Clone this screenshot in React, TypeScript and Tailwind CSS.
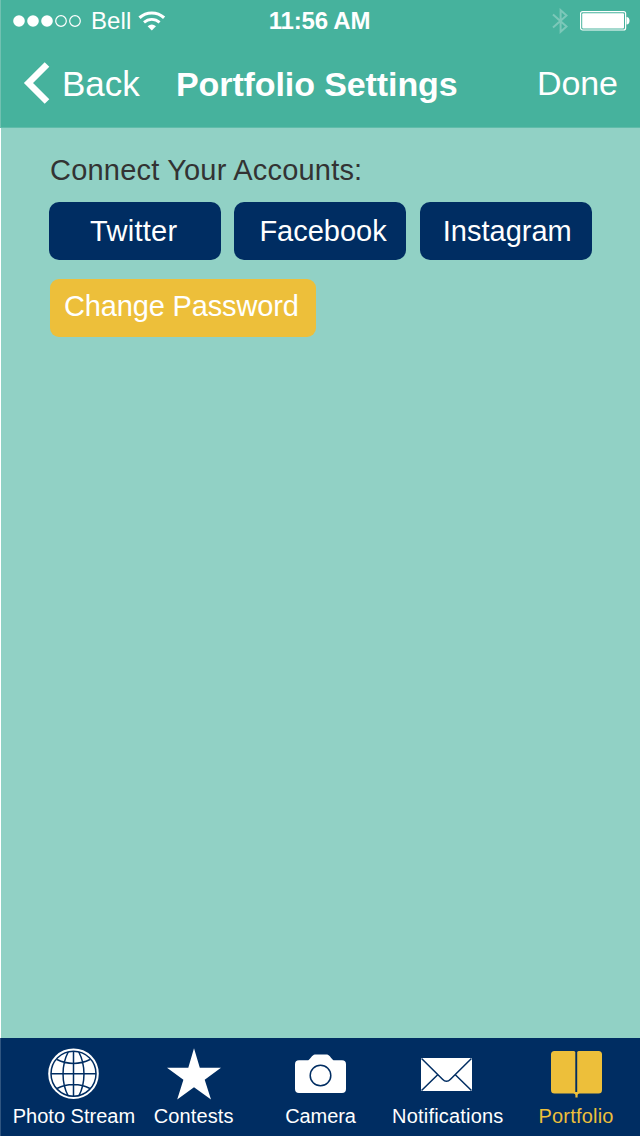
import React from "react";

function SignalDots() {
  return (
    <svg width="70" height="14" viewBox="0 0 70 14" fill="white">
      <circle cx="7" cy="7" r="5.8" />
      <circle cx="21" cy="7" r="5.8" />
      <circle cx="35" cy="7" r="5.8" />
      <g fill="none" stroke="white" strokeWidth="1.2">
        <circle cx="49" cy="7" r="5.3" />
        <circle cx="63" cy="7" r="5.3" />
      </g>
    </svg>
  );
}

function Wifi() {
  return (
    <svg width="28" height="20" viewBox="0 0 28 20" fill="none" stroke="white">
      <path d="M1.5 6.800C8.500 .4 19.100 .4 26.100 6.800" strokeWidth="3.200" />
      <path d="M6 11.400C10.500 7.400 17.100 7.400 21.600 11.400" strokeWidth="2.800" />
      <path d="M9.600 15.200Q13.800 11.600 18 15.200L13.800 19.400Z" fill="white" stroke="none" />
    </svg>
  );
}

function Bluetooth() {
  return (
    <svg width="18" height="26" viewBox="0 0 18 26" fill="none" stroke="#7cc8b9" strokeWidth="2">
      <path d="M1 6.500 14.500 18.600 8.600 23.800V2.200L14.500 7.600 1 19.500" />
    </svg>
  );
}

function Battery() {
  return (
    <svg width="51" height="20" viewBox="0 0 51 20">
      <rect x=".6" y=".6" width="45" height="18.400" rx="2" fill="none" stroke="white" strokeWidth="1.200" />
      <rect x="2.200" y="2.200" width="41.800" height="15.200" rx="1" fill="white" />
      <path d="M46.500 6c2 .2 3 1.500 3 3.800s-1 3.600-3 3.800Z" fill="white" />
    </svg>
  );
}

function Globe() {
  return (
    <svg width="52" height="52" viewBox="0 0 52 52" fill="none" stroke="#002d62" strokeWidth="1.500">
      <circle cx="25.500" cy="25.700" r="25.300" fill="white" stroke="none" />
      <circle cx="25.500" cy="25.700" r="22.500" />
      <path d="M25.500 3.500v45M3 25.700h45M20.200 4C13.300 17 13.300 35 20.200 48M30.800 4c6.900 13 6.900 31 0 44M9 11.500c10 5.200 23 5.200 33 0M9 40.500c10-5.200 23-5.200 33 0" />
    </svg>
  );
}

function Star() {
  return (
    <svg width="54" height="52" viewBox="0 0 54 52" fill="white">
      <path d="M27 .3 32.800 19.800H54L37.700 31.800 44 51.500 27 39.300 10.200 51.500 16.400 31.800 0 19.800h21.300Z" />
    </svg>
  );
}

function Camera() {
  return (
    <svg width="51" height="39" viewBox="0 0 51 39">
      <path d="M4 6.300h8.500c2.200 0 4.700-5.900 7.400-5.900H32c2.700 0 5 5.900 7.400 5.900H47a4 4 0 0 1 4 4V35a4 4 0 0 1-4 4H4a4 4 0 0 1-4-4V10.300a4 4 0 0 1 4-4Z" fill="white" />
      <circle cx="25.500" cy="21.500" r="10.300" fill="none" stroke="#002d62" strokeWidth="1.500" />
    </svg>
  );
}

function Envelope() {
  return (
    <svg width="51" height="33" viewBox="0 0 51 33">
      <path d="M0 0h51v33H0Z" fill="white" />
      <path d="m.5.5 21 20.700Q25.500 25.500 29.500 21.200L50.500.5M.5 32.500l16.200-15.800M50.500 32.500 34.300 16.700" fill="none" stroke="#002d62" strokeWidth="1.500" />
    </svg>
  );
}

function Book() {
  return (
    <svg width="51" height="47" viewBox="0 0 51 47" fill="#edbf3a">
      <path d="M3.500 0H22.500a2 2 0 0 1 1.800 1V41h1.900V1a2 2 0 0 1 1.800-1H47.500A3.500 3.500 0 0 1 51 3.500v35.500a3.500 3.500 0 0 1-3.500 3.500H28.500q-1.900 0-1.900 1.500v2.500h-2.200V44q0-1.500-1.900-1.500H3.500A3.500 3.500 0 0 1 0 39v-35.500A3.500 3.500 0 0 1 3.500 0Z" />
    </svg>
  );
}

const tabs = [
  { label: "Photo Stream", icon: <Globe />, pos: "pl-[18px]", pad: "pt-[10px]", text: "text-white tracking-[0px]" },
  { label: "Contests", icon: <Star />, pos: "pl-[2px]", pad: "pt-[10px]", text: "text-white tracking-[0.1px]" },
  { label: "Camera", icon: <Camera />, pos: "", pad: "pt-[16px]", text: "text-white tracking-[-0.1px]" },
  { label: "Notifications", icon: <Envelope />, pos: "pr-[3px]", pad: "pt-[20px]", text: "pl-[2px] text-white tracking-[0.2px]" },
  { label: "Portfolio", icon: <Book />, pos: "", pad: "pt-[13px]", text: "text-[#edbf3a] tracking-[0.2px]" },
];

const accountButton =
  "flex h-[58px] w-[172px] items-center rounded-[10px] bg-[#002d62] pt-px text-[29px] leading-none text-white";

export default function App() {
  return (
    <div className="flex h-[1136px] w-[640px] flex-col overflow-hidden bg-[#91d1c5] font-['Liberation_Sans',Arial,sans-serif]">
      <header className="h-[128px] shrink-0 border-b border-l border-b-[#5fbcaa] border-l-[#71c1b1] bg-[#46b29d] text-white">
        <div className="grid h-[41px] grid-cols-3 items-center">
          <div className="flex items-center pl-[11px]">
            <SignalDots />
            <span className="ml-[9px] text-[24px] leading-none tracking-[0.1px]">Bell</span>
            <span className="ml-[7px]">
              <Wifi />
            </span>
          </div>
          <span className="pr-[2px] text-center text-[24px] leading-none font-bold tracking-[-0.2px]">11:56 AM</span>
          <div className="flex items-center justify-end pr-[9px]">
            <Bluetooth />
            <span className="ml-[10px]">
              <Battery />
            </span>
          </div>
        </div>
        <div className="flex h-[86px] items-center pb-[2px] text-[34px] leading-none whitespace-nowrap">
          <button className="flex w-[175px] items-center pl-[21px]">
            <svg width="28" height="42" viewBox="0 0 28 42" fill="none" stroke="white" strokeWidth="6.500">
              <path d="M25 2.500 6.500 21 25 39.500" />
            </svg>
            <span className="ml-[12px] text-[35px]">Back</span>
          </button>
          <h1 className="w-[361px] pt-px font-bold tracking-[-0.1px]">Portfolio Settings</h1>
          <button className="tracking-[-0.1px]">Done</button>
        </div>
      </header>

      <main className="flex-1 border-l border-white pt-[28px] pl-[48px]">
        <h2 className="pl-px text-[29px] leading-[29px] tracking-[0.2px] text-[#333333]">Connect Your Accounts:</h2>
        <div className="mt-[17px] flex gap-[13.4px]">
          <button className={accountButton + " pl-[41px] tracking-[0.3px]"}>Twitter</button>
          <button className={accountButton + " pl-[25px]"}>Facebook</button>
          <button className={accountButton + " pl-[23px]"}>Instagram</button>
        </div>
        <button className="mt-[19px] ml-px flex h-[58px] w-[266px] items-center rounded-[9px] bg-[#edbf3a] pb-[3px] pl-[14px] text-[29px] leading-none tracking-[-0.15px] text-white">
          Change Password
        </button>
      </main>

      <nav className="grid h-[98px] shrink-0 grid-cols-5 border-l border-[#305580] bg-[#002d62]">
        {tabs.map((t) => (
          <button key={t.label} className={"flex min-w-0 flex-col items-center " + t.pos}>
            <span className={"flex h-[66px] items-start " + t.pad}>{t.icon}</span>
            <span className={"text-[20px] leading-[24px] whitespace-nowrap " + t.text}>{t.label}</span>
          </button>
        ))}
      </nav>
    </div>
  );
}
